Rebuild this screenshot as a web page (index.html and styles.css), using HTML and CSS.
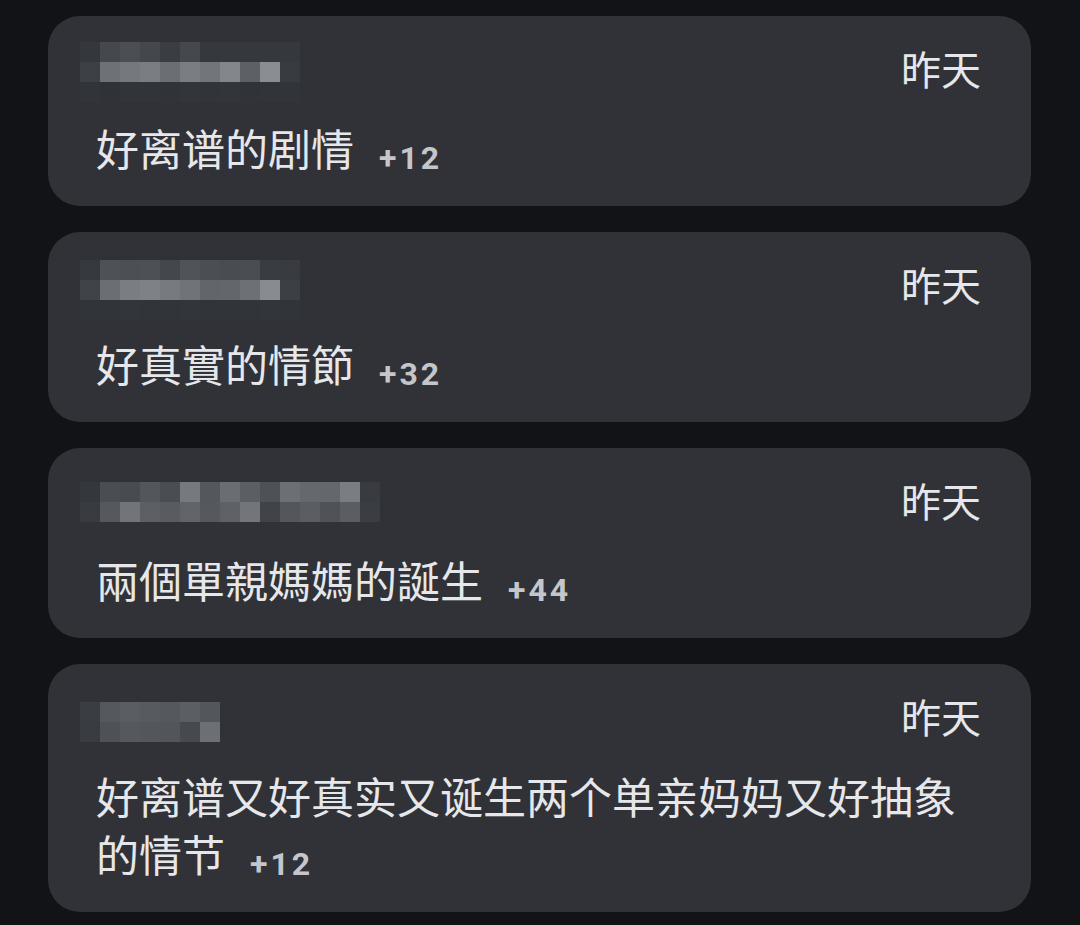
FILE: index.html
```html
<!DOCTYPE html>
<html lang="zh-CN">
<head>
    <meta charset="UTF-8">
    <meta name="viewport" content="width=device-width, initial-scale=1.0">
    <title>Comments</title>
    <link rel="stylesheet" href="styles.css">
</head>
<body>
    <div class="list">
        <div class="card">
            <div class="head">
                <div class="name nm-1" data-px="52,69,75,68,58,69,53,53,53,53,53|61,110,117,122,107,122,114,131,93,138,56|49,47,49,49,48,50,49,50,48,49,49"></div>
                <span class="time">昨天</span>
            </div>
            <p class="text">好离谱的剧情<span class="count">+12</span></p>
        </div>
        <div class="card">
            <div class="head">
                <div class="name nm-2" data-px="54,78,76,77,68,80,75,73,74,57,56|64,107,122,126,119,112,98,99,109,136,60|49,49,50,49,49,50,49,49,49,50,49"></div>
                <span class="time">昨天</span>
            </div>
            <p class="text">好真實的情節<span class="count">+32</span></p>
        </div>
        <div class="card">
            <div class="head">
                <div class="name nm-3" data-px="52,74,72,83,74,118,84,106,91,78,108,101,100,122,56|56,85,113,92,88,97,85,94,114,64,83,90,79,90,58"></div>
                <span class="time">昨天</span>
            </div>
            <p class="text hant" lang="zh-Hant">兩個單親媽媽的誕生<span class="count">+44</span></p>
        </div>
        <div class="card">
            <div class="head">
                <div class="name nm-4" data-px="58,85,90,87,85,91,83|57,78,85,83,82,70,108"></div>
                <span class="time">昨天</span>
            </div>
            <p class="text">好离谱又好真实又诞生两个单亲妈妈又好抽象的情节<span class="count">+12</span></p>
        </div>
    </div>

    <script>
        // build the mosaic that hides each user name
        document.querySelectorAll(".name").forEach(function (box) {
            let rows = box.dataset.px.split("|");
            rows.forEach(function (row) {
                let line = document.createElement("div");
                line.className = "px-row";
                row.split(",").forEach(function (v) {
                    let cell = document.createElement("span");
                    let g = parseInt(v, 10);
                    cell.style.background = "rgb(" + g + "," + (g + 3) + "," + (g + 8) + ")";
                    line.appendChild(cell);
                });
                box.appendChild(line);
            });
        });
    </script>
</body>
</html>
```

FILE: styles.css
```css
body {margin: 0; background: #111316; font-family: "Noto Sans CJK SC", "Noto Sans", sans-serif; color: #e6e7ea;}
.list {display: flex; flex-direction: column; gap: 26px; padding: 16px 49px 10px 48px;}
.card {background: #303237; border-radius: 32px; padding: 24px 50px 30px 32px;}
.head {display: flex; justify-content: space-between; align-items: flex-start; height: 56px;}
.time {font-size: 40px; line-height: 56px; color: #e6e7ea;}
.name {display: flex; flex-direction: column;}
.nm-1 {margin-top: 2px;}
.nm-2 {margin-top: 4px;}
.nm-3 {margin-top: 10px;}
.nm-4 {margin-top: 14px;}
.px-row {display: flex;}
.px-row span {width: 20px; height: 20px;}
.text {margin: 22px 20px 0 16px; font-size: 43px; line-height: 58px; color: #e6e7ea;}
.hant {font-family: "Noto Sans CJK TC", "Noto Sans", sans-serif;}
.count {font-family: Roboto, "Noto Sans", sans-serif; font-weight: 700; font-size: 32px; line-height: 1; letter-spacing: 3px; color: #c4c6cb; margin-left: 25px; vertical-align: -3px;}
```
